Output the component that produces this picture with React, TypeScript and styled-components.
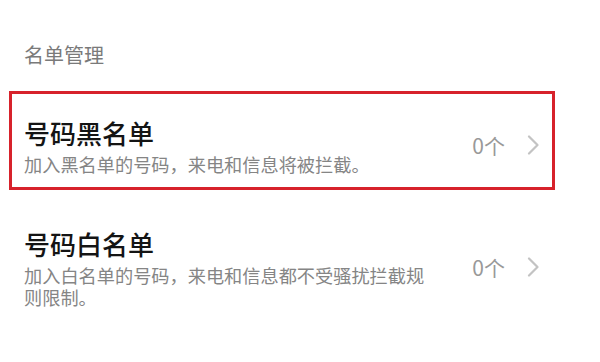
import styled, { createGlobalStyle } from 'styled-components';

const GlobalStyle = createGlobalStyle`
	html, body {
		margin: 0;
		padding: 0;
		background: #ffffff;
		font-family: "Noto Sans CJK SC", "Noto Sans", sans-serif;
	}
`;

const Page = styled.div`
	width: 600px;
	min-height: 362px;
	padding-top: 41px;
	box-sizing: border-box;
	background: #ffffff;
`;

const SectionTitle = styled.h2`
	margin: 0 0 22px 0;
	padding-left: 24px;
	font-size: 20px;
	font-weight: 400;
	line-height: 28px;
	color: #7a7a7a;
`;

const List = styled.div`
	display: flex;
	flex-direction: column;
	gap: 12px;
`;

const Row = styled.div<{ $focused?: boolean }>`
	margin: 0 45px 0 9px;
	padding: 21px 13px 12px 12px;
	border: 3px solid ${(p) => (p.$focused ? '#d7222b' : 'transparent')};
	display: flex;
	align-items: center;
	cursor: pointer;
`;

const TextWrap = styled.div`
	width: 410px;
	display: flex;
	flex-direction: column;
	gap: 2px;
`;

const Title = styled.div`
	font-size: 26px;
	font-weight: 500;
	line-height: 36px;
	color: #141414;
`;

const Description = styled.div`
	font-size: 18.2px;
	line-height: 22px;
	color: #858585;
`;

const Side = styled.div`
	margin-left: auto;
	display: flex;
	align-items: center;
	gap: 22px;
`;

const Count = styled.span`
	font-size: 21px;
	line-height: 28px;
	color: #999999;
`;

const Chevron = () => (
	<svg width='12' height='20' viewBox='0 0 12 20' fill='none'>
		<path d='M2 1.5l8.5 8.5-8.5 8.5' stroke='#c3c3c3' strokeWidth='2.2' strokeLinecap='round' strokeLinejoin='round' />
	</svg>
);

type ItemProps = {
	title: string;
	description: string;
	count: number;
	focused?: boolean;
};

const ListItem = ({ title, description, count, focused }: ItemProps) => (
	<Row $focused={focused}>
		<TextWrap>
			<Title>{title}</Title>
			<Description>{description}</Description>
		</TextWrap>
		<Side>
			<Count>{count}个</Count>
			<Chevron />
		</Side>
	</Row>
);

export default function App() {
	return (
		<Page>
			<GlobalStyle />
			<SectionTitle>名单管理</SectionTitle>
			<List>
				<ListItem
					focused
					title='号码黑名单'
					description='加入黑名单的号码，来电和信息将被拦截。'
					count={0}
				/>
				<ListItem
					title='号码白名单'
					description='加入白名单的号码，来电和信息都不受骚扰拦截规则限制。'
					count={0}
				/>
			</List>
		</Page>
	);
}
